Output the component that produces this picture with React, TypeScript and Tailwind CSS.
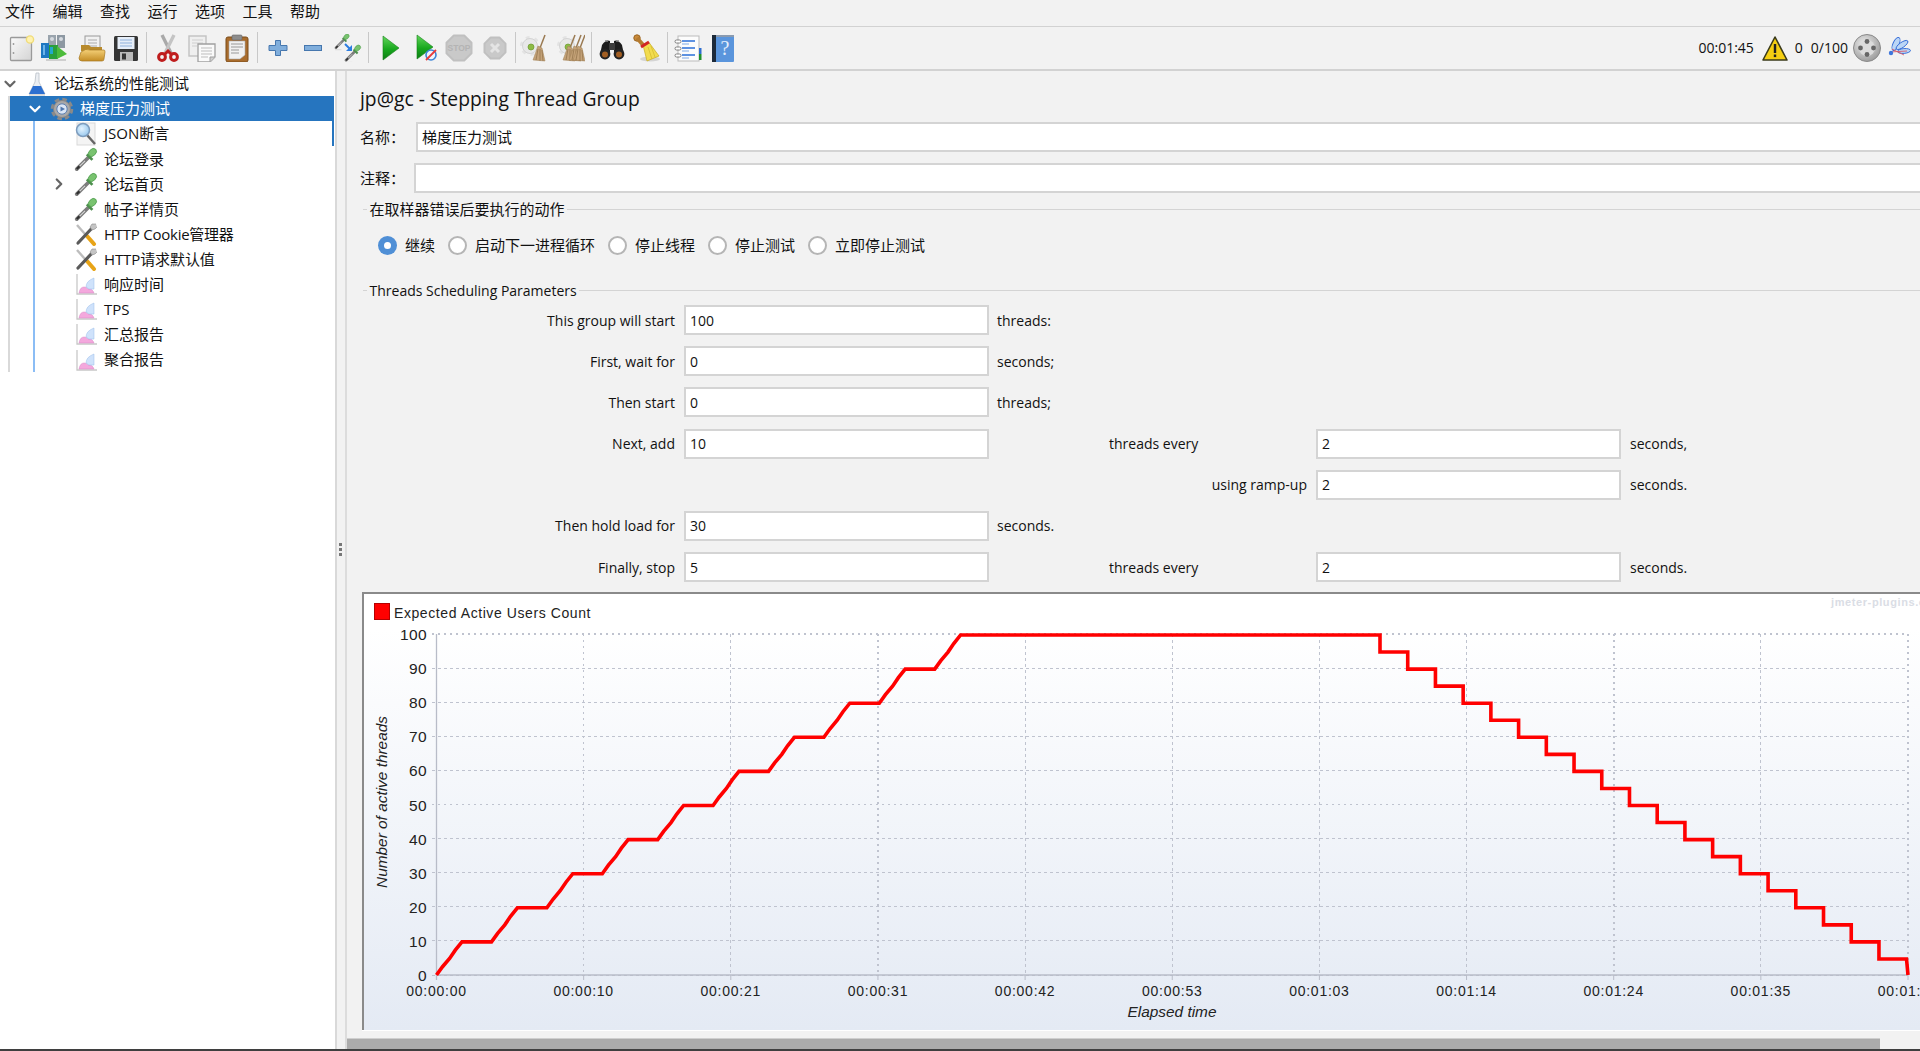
import React from "react";
import { ChevronDown, ChevronRight } from "lucide-react";

const Box = ({ children, w = 28, h = 28, className = "" }: any) => (
  <svg width={w} height={h} viewBox={`0 0 ${w} ${h}`} className={"shrink-0 block " + className}>{children}</svg>
);

const Pipette = () => (
  <g>
    <path d="M3 24 L17 10" stroke="#7d7d7d" strokeWidth="4" strokeLinecap="round" />
    <path d="M4 23 L12 15" stroke="#d8d8d8" strokeWidth="1.1" />
    <path d="M3 24 L6 21" stroke="#2f2f2f" strokeWidth="2.4" />
    <path d="M14 8 L20 14" stroke="#4d8f4d" strokeWidth="3" />
    <ellipse cx="20" cy="6" rx="3.6" ry="5" transform="rotate(45 20 6)" fill="#79c36f" stroke="#4b9a4b" strokeWidth="0.8" />
    <path d="M2 27 L12 27" stroke="#c9c9c9" strokeWidth="1" />
  </g>
);

const New = () => (
  <Box>
    <defs><linearGradient id="nw" x1="0" y1="0" x2="1" y2="1"><stop offset="0" stopColor="#fafafa" /><stop offset="1" stopColor="#d4d4d4" /></linearGradient></defs>
    <rect x="3.5" y="3.5" width="21" height="23" rx="1" fill="url(#nw)" stroke="#9a9a9a" strokeWidth="1.3" />
    <circle cx="6.5" cy="10" r="0.9" fill="#999" /><circle cx="6.5" cy="19" r="0.9" fill="#999" />
    <circle cx="23" cy="5.5" r="3.6" fill="#fff2b0" stroke="#f0dc78" strokeWidth="1.4" />
  </Box>
);
const Templates = () => (
  <Box>
    <rect x="8" y="1" width="8" height="13" fill="#9aa4ad" /><rect x="17" y="1" width="8" height="13" fill="#8d98a2" />
    <circle cx="12" cy="5" r="2" fill="#d5dadf" /><circle cx="21" cy="5" r="2" fill="#d5dadf" />
    <rect x="1" y="9" width="8" height="15" fill="#1f78c1" /><rect x="3" y="11" width="2" height="10" fill="#6cb4ea" />
    <rect x="9" y="11" width="9" height="15" fill="#2a9f3a" /><rect x="10" y="13" width="3" height="7" fill="#24a8c9" />
    <path d="M17 12 L27 20 L17 25 Z" fill="#4cbb3a" />
    <path d="M6 26 L26 26" stroke="#cfcfcf" strokeWidth="2" />
  </Box>
);
const OpenF = () => (
  <Box>
    <rect x="7" y="2" width="15" height="17" fill="#f1f1f1" stroke="#9a9a9a" />
    <path d="M10 6h9M10 9h9M10 12h9" stroke="#aaa" strokeWidth="1" />
    <path d="M3 11 L11 11 L13 13 L24 13 L24 17 L3 17 Z" fill="#b88a2c" />
    <defs><linearGradient id="of" x1="0" y1="0" x2="0" y2="1"><stop offset="0" stopColor="#f6d27a" /><stop offset="1" stopColor="#c48d25" /></linearGradient></defs>
    <path d="M3 18 Q8 14 12 16 L26 16 Q27 16 27 18 L26 25 Q26 27 24 27 L4 27 Q1 27 1 24 Z" fill="url(#of)" stroke="#a87a22" strokeWidth="0.7" />
  </Box>
);
const Save = () => (
  <Box>
    <rect x="2" y="2" width="24" height="25" rx="1.5" fill="#353535" />
    <rect x="5.5" y="3" width="17" height="12" fill="#e6eef8" />
    <path d="M8 6h12M8 9h12M8 12h12" stroke="#8fb1dc" strokeWidth="1" />
    <rect x="8" y="18" width="13" height="9" fill="#b9b9b9" /><rect x="10" y="19.5" width="4" height="6" fill="#333" />
  </Box>
);
const Cut = () => (
  <Box>
    <path d="M8 1 L17 19" stroke="#a9a9a9" strokeWidth="3.4" /><path d="M20 1 L11 19" stroke="#c4c4c4" strokeWidth="3.4" />
    <circle cx="8" cy="23" r="3.4" fill="#f2f2f2" stroke="#bf1d1d" strokeWidth="3" />
    <circle cx="20" cy="23" r="3.4" fill="#f2f2f2" stroke="#bf1d1d" strokeWidth="3" />
    <path d="M11 20 L14 17 L17 20" stroke="#bf1d1d" strokeWidth="3" fill="none" />
  </Box>
);
const Copy = () => (
  <Box>
    <rect x="1" y="2" width="17" height="20" fill="#efefef" stroke="#c2c2c2" strokeWidth="1.4" />
    <path d="M4 6h11M4 9h11M4 12h5" stroke="#cfcfcf" strokeWidth="1" />
    <path d="M10 10 L27 10 L27 23 L22 28 L10 28 Z" fill="#fafafa" stroke="#a0a0a0" strokeWidth="1.3" />
    <path d="M13 14h11M13 17h11M13 20h11M13 23h7" stroke="#bdbdbd" strokeWidth="1" />
    <path d="M22 28 L22 23 L27 23" fill="#cfcfcf" stroke="#a0a0a0" />
  </Box>
);
const Paste = () => (
  <Box>
    <rect x="3" y="3" width="22" height="25" rx="2" fill="#a96c2c" stroke="#7b4c1b" />
    <path d="M6 7 L22 7 L22 21 L17 25 L6 25 Z" fill="#f1f1f1" stroke="#aaa" strokeWidth="0.6" />
    <rect x="9" y="1" width="10" height="5" rx="1" fill="#8d8d8d" stroke="#666" strokeWidth="0.6" />
    <path d="M8 10h12M8 13h12M8 16h8M8 19h8" stroke="#9a9a9a" strokeWidth="1.2" />
  </Box>
);
const Plus = () => (
  <Box><path d="M11.5 6.5 H16.5 V11.5 H23 V16.5 H16.5 V21.5 H11.5 V16.5 H5 V11.5 H11.5 Z" fill="#80aedc" stroke="#4677ae" strokeWidth="1" /></Box>
);
const Minus = () => (
  <Box><rect x="5.5" y="11.5" width="17" height="5" fill="#80aedc" stroke="#4677ae" strokeWidth="1" /></Box>
);
const Toggle = () => (
  <Box>
    <g transform="translate(0,-1) scale(0.62)"><Pipette /></g>
    <g transform="translate(10,10) scale(0.68)"><Pipette /></g>
    <path d="M11 10 L17 16" stroke="#2d7de0" strokeWidth="2" /><path d="M18 11 L18 17 L12 17 Z" fill="#2d7de0" />
  </Box>
);
const Tri = ({ id }: any) => (
  <>
    <defs><linearGradient id={id} x1="0" y1="0" x2="0" y2="1"><stop offset="0" stopColor="#63d65c" /><stop offset="0.55" stopColor="#18a81e" /><stop offset="1" stopColor="#0d7d14" /></linearGradient></defs>
    <path d="M6 2 L22 14 L6 26 Z" fill={`url(#${id})`} stroke="#15801a" strokeWidth="0.6" />
  </>
);
const Start = () => <Box><Tri id="st1" /></Box>;
const StartNT = () => (
  <Box>
    <g transform="translate(0,-1)"><Tri id="st2" /></g>
    <circle cx="20" cy="21" r="5" fill="#eef4fb" stroke="#3d86d8" strokeWidth="1.6" />
    <path d="M15 26 L25 16" stroke="#e83a3a" strokeWidth="1.8" />
  </Box>
);
const Oct = ({ r }: any) => {
  const c = 14, a = r * 0.414;
  return <path d={`M${c - a} ${c - r} L${c + a} ${c - r} L${c + r} ${c - a} L${c + r} ${c + a} L${c + a} ${c + r} L${c - a} ${c + r} L${c - r} ${c + a} L${c - r} ${c - a} Z`} fill="#c9c9c9" stroke="#c0c0c0" strokeLinejoin="round" strokeWidth="2" />;
};
const Stop = () => (
  <Box>
    <Oct r={12.5} />
    <text x="14" y="17" textAnchor="middle" fontSize="8.5" fontWeight="700" fill="#b4b4b4" fontFamily="Liberation Sans, sans-serif">STOP</text>
  </Box>
);
const Shut = () => (
  <Box>
    <Oct r={10.5} />
    <path d="M10 10 L18 18 M18 10 L10 18" stroke="#e4e4e4" strokeWidth="3" />
  </Box>
);
const GearBits = () => (
  <>
    <circle cx="10" cy="12" r="8" fill="none" stroke="#e3e3e3" strokeWidth="4" strokeDasharray="3.5 4.88" />
    <circle cx="10" cy="12" r="7.5" fill="#e8e8e8" stroke="#d4d4d4" />
    <circle cx="11" cy="13" r="3" fill="#8dbb45" stroke="#6b9a2e" strokeWidth="0.7" />
  </>
);
const Broom = ({ x = 0 }: any) => (
  <g transform={`translate(${x},0)`}>
    <path d="M25 1 L20 14" stroke="#9a7a52" strokeWidth="1.5" />
    <path d="M18 12 L22 14 L25 27 L13 26 Z" fill="#c4a278" stroke="#a08055" strokeWidth="0.5" />
    <path d="M18 15 L16 26 M20 15 L20 27 M22 16 L23 27" stroke="#8f7048" strokeWidth="0.7" />
  </g>
);
const Clear = () => <Box><GearBits /><Broom /></Box>;
const ClearAll = () => <Box><GearBits /><Broom x={-7} /><Broom x={-1} /><Broom x={3} /></Box>;
const Binoc = () => (
  <Box>
    <path d="M4 11 Q8 5 12 7 L12 21 L2 21 Z" fill="#1d1d1d" /><path d="M24 11 Q20 5 16 7 L16 21 L26 21 Z" fill="#1d1d1d" />
    <rect x="11" y="9" width="6" height="7" fill="#3c3c3c" />
    <path d="M7 7 L10 7 M18 7 L21 7" stroke="#888" strokeWidth="1.5" />
    <circle cx="7" cy="20" r="5.4" fill="#232323" /><circle cx="21" cy="20" r="5.4" fill="#232323" />
    <circle cx="7" cy="20.5" r="3" fill="#a25e22" /><circle cx="21" cy="20.5" r="3" fill="#a25e22" />
  </Box>
);
const YBroom = () => (
  <Box>
    <ellipse cx="18" cy="25" rx="10" ry="2.5" fill="#d4d4d4" />
    <circle cx="5" cy="4" r="3.2" fill="#c98a3a" stroke="#9a6522" />
    <path d="M5 4 L12 12" stroke="#b57b30" strokeWidth="4" />
    <path d="M11 11 L17 8.5 L27 22 L15 27 Z" fill="#f2dc4e" stroke="#c9ac20" strokeWidth="0.7" />
    <path d="M9 13 L17 8" stroke="#d22525" strokeWidth="3" />
    <path d="M16 13 L20 25 M19 12 L23 23" stroke="#d2b92c" strokeWidth="0.7" />
  </Box>
);
const ListI = () => (
  <Box>
    <rect x="4" y="2" width="21" height="25" fill="#fcfcfc" stroke="#bbb" />
    <path d="M8 7h13M8 14h13M8 21h13" stroke="#2a6fd8" strokeWidth="1.4" /><path d="M8 10h7M8 17h7M8 24h7" stroke="#7fa9e6" strokeWidth="1.2" />
    {[6, 13, 20].map((y) => <rect key={y} x="1" y={y} width="6" height="3" rx="1.5" fill="#fff" stroke="#666" strokeWidth="0.8" />)}
    <rect x="25" y="14" width="2.5" height="6" fill="#2f6fd0" /><rect x="25" y="20" width="2.5" height="6" fill="#1e8f2d" />
  </Box>
);
const Help = () => (
  <Box>
    <rect x="3" y="1" width="22" height="27" rx="1" fill="#5a95dc" />
    <rect x="3" y="1" width="4" height="27" fill="#1c2a3a" /><rect x="7" y="1" width="18" height="2" fill="#8a9bb0" />
    <text x="16" y="21" textAnchor="middle" fontSize="20" fill="#e4eefb" fontFamily="Liberation Serif, serif">?</text>
  </Box>
);
const Sep = ({ className }: any) => <div className={"w-[1px] h-[31px] bg-[#c8c8c8] shrink-0 " + className} />;
const Tool = ({ className, children }: any) => <div className={"shrink-0 " + className}>{children}</div>;

const Warn = () => (
  <Box>
    <path d="M14 3 L26 26 L2 26 Z" fill="#f5cf12" stroke="#3a3a1a" strokeWidth="1.6" strokeLinejoin="round" />
    <rect x="12.8" y="10" width="2.4" height="9" fill="#222" /><rect x="12.8" y="20.5" width="2.4" height="2.6" fill="#222" />
  </Box>
);
const Disc = () => (
  <Box>
    <defs><radialGradient id="ds" cx="0.4" cy="0.35" r="0.8"><stop offset="0" stopColor="#eeeeee" /><stop offset="1" stopColor="#8c8c8c" /></radialGradient></defs>
    <circle cx="14" cy="14" r="13.5" fill="url(#ds)" stroke="#8a8a8a" />
    <circle cx="14" cy="14" r="8" fill="#dcdcdc" />
    <circle cx="14" cy="7.5" r="2.4" fill="#666" /><circle cx="14" cy="20.5" r="2.4" fill="#666" />
    <circle cx="7.5" cy="14" r="2.4" fill="#666" /><circle cx="20.5" cy="14" r="2.4" fill="#666" />
  </Box>
);
const Feather = () => (
  <Box w={24} h={24}>
    <g fill="#bcd6f5" stroke="#2f68d6" strokeWidth="0.9">
      <ellipse cx="9" cy="8" rx="3" ry="7" transform="rotate(25 9 8)" />
      <ellipse cx="15" cy="9" rx="2.6" ry="7" transform="rotate(55 15 9)" />
      <ellipse cx="17" cy="15" rx="2.4" ry="6.5" transform="rotate(85 17 15)" />
    </g>
    <path d="M3 16 L20 15 M5 13 L17 19" stroke="#d65a6a" strokeWidth="0.9" />
    <circle cx="4" cy="17" r="2.2" fill="#3f77dd" />
  </Box>
);

const TFlask = () => (
  <Box w={24} h={24}>
    <path d="M11 1 L14 1 L14 10 L20 22 L4 22 L10 10 Z" fill="#eceff3" stroke="#b9bfc7" strokeWidth="0.8" />
    <path d="M8 14 L16 14 L20 22 L4 22 Z" fill="#2c6fd0" />
    <path d="M4 23 L20 23" stroke="#c4c4c4" />
  </Box>
);
const TGear = () => (
  <Box w={24} h={24}>
    <circle cx="12" cy="12" r="9" fill="none" stroke="#8a8a8a" strokeWidth="4.6" strokeDasharray="4.2 2.87" />
    <circle cx="12" cy="12" r="8.5" fill="#a8a8a8" stroke="#858585" />
    <circle cx="12" cy="12" r="5.2" fill="#dbe6f5" stroke="#5c7fb0" />
    <path d="M10.5 9.5 L15 12 L10.5 14.5 Z" fill="#4f77ae" />
  </Box>
);
const TMag = () => (
  <Box w={24} h={24}>
    <defs><radialGradient id="mg" cx="0.4" cy="0.4" r="0.7"><stop offset="0" stopColor="#e4f3fe" /><stop offset="1" stopColor="#8fc3ec" /></radialGradient></defs>
    <rect x="3" y="1" width="18" height="22" fill="#f4f4f4" stroke="#d9d9d9" />
    <path d="M13 13 L21 22" stroke="#666" strokeWidth="2.5" />
    <circle cx="9" cy="8" r="6.5" fill="url(#mg)" stroke="#7d9cbd" strokeWidth="1.5" />
  </Box>
);
const TPipe = () => <Box w={24} h={24}><g transform="scale(0.92)"><Pipette /></g></Box>;
const TTools = () => (
  <Box w={24} h={24}>
    <path d="M3 3 L18 20" stroke="#bdbdbd" strokeWidth="2.4" />
    <path d="M13 14 L20 22" stroke="#e8a417" strokeWidth="4" strokeLinecap="round" />
    <path d="M19 5 L4 21" stroke="#5a5a5a" strokeWidth="3.2" strokeLinecap="round" />
    <path d="M22 2 L18 2 L16 5 L18 8 L21 7 L23 5" fill="#c4c4c4" stroke="#8c8c8c" strokeWidth="0.6" />
  </Box>
);
const TChart = () => (
  <Box w={24} h={24}>
    <path d="M3 2 L3 22 L23 22" stroke="#c8c8c8" strokeWidth="1.3" fill="none" />
    <path d="M5 21 Q6 15 10 15 Q13 15 14 17 Q17 16 19 19 L20 21 Z" fill="#f4a8dd" stroke="#d884c4" strokeWidth="0.5" />
    <path d="M12 15 Q12 9 20 6 L20 17 Q14 18 12 15 Z" fill="#cfe2fb" stroke="#9abde8" strokeWidth="0.5" />
  </Box>
);

const Row = ({ chevron, icon, label, slot, gap, textGap, className = "", chevClass = "text-[#666]" }: any) => (
  <div className={"flex items-center h-[25.1px] whitespace-nowrap " + className}>
    <span className={"w-[20px] flex justify-center shrink-0 " + slot}>
      {chevron === "d" && <ChevronDown size={18} strokeWidth={3} className={chevClass} />}
      {chevron === "r" && <ChevronRight size={18} strokeWidth={3} className={chevClass} />}
    </span>
    <span className={gap}>{icon}</span>
    <span className={textGap}>{label}</span>
  </div>
);

const fieldBox = "h-[30px] bg-white border-2 border-[#d4d4d4] flex items-center px-[4px] text-[14px] text-[#111]";
const latin = "text-[14px] whitespace-nowrap";

const Param = ({ label, value, unit, mid, value2, unit2 }: any) => (
  <div className="flex items-center h-[30px]">
    <div className={"w-[315px] text-right shrink-0 " + latin}>{label}</div>
    <div className={"ml-[9px] w-[305px] shrink-0 " + fieldBox}>{value}</div>
    {unit && <div className={"ml-[8px] " + latin}>{unit}</div>}
    {mid && <div className={"ml-[120px] w-[207px] shrink-0 " + latin}>{mid}</div>}
    {value2 && (
      <>
        <div className={"w-[305px] shrink-0 " + fieldBox}>{value2}</div>
        <div className={"ml-[9px] " + latin}>{unit2}</div>
      </>
    )}
  </div>
);

const Radio = ({ on, label, className }: any) => (
  <div className={"flex items-center shrink-0 " + className}>
    <span className={"w-[19px] h-[19px] rounded-full shrink-0 flex items-center justify-center " + (on ? "bg-[#4f8fd6]" : "bg-white border-2 border-[#b5b5b5]")}>
      {on && <span className="w-[7px] h-[7px] rounded-full bg-white" />}
    </span>
    <span className="ml-[8px] whitespace-nowrap">{label}</span>
  </div>
);

const Legend = ({ label, className, textClass = "" }: any) => (
  <div className={"flex items-center h-[18px] " + className}>
    <div className="ml-[3px] w-[4px] h-[1px] bg-[#d4d4d4] shrink-0" />
    <div className={"ml-[2.5px] whitespace-nowrap " + textClass}>{label}</div>
    <div className="ml-[2px] flex-1 h-[1px] bg-[#d4d4d4]" />
  </div>
);

const Chart = () => {
  const L = 436.5, R = 1908, T = 634, B = 975;
  const dx = (R - L) / 10, dy = (B - T) / 10;
  const thickX = [1, 3, 8, 10];
  const xLabels = ["00:00:00", "00:00:10", "00:00:21", "00:00:31", "00:00:42", "00:00:53", "00:01:03", "00:01:14", "00:01:24", "00:01:35", "00:01:45"];
  const yOf = (v: number) => B + 1 - (v * dy) / 10;
  const pts: [number, number][] = [[L, yOf(0) - 1]];
  for (let k = 1; k <= 10; k++) {
    const s = 462 + 55.4 * (k - 1);
    const x0 = k === 1 ? L : 462 + 55.4 * (k - 2) + 29.5;
    const y0 = k === 1 ? yOf(0) - 1 : yOf((k - 1) * 10);
    const y1 = yOf(k * 10);
    [0.25, 0.5, 0.75].forEach((t, j) => {
      pts.push([x0 + (s - x0) * t + (j % 2 ? 0.35 : -0.35), y0 + (y1 - y0) * t]);
    });
    pts.push([s, y1]);
    if (k < 10) pts.push([s + 29.5, y1]);
  }
  for (let k = 0; k < 19; k++) {
    const x = 1380 + 27.72 * k;
    pts.push([x, yOf(100 - 5 * k)]);
    pts.push([x, yOf(95 - 5 * k)]);
  }
  pts.push([1906.5, yOf(5)]);
  pts.push([1908, B]);
  const f = "Liberation Sans, Arial, sans-serif";
  return (
    <svg width={1556} height={436} viewBox="364 594 1556 436" className="block">
      {Array.from({ length: 11 }, (_, i) => {
        const y = B - i * dy;
        const big = i === 10 || i === 5;
        return <line key={"h" + i} x1={L - 5} x2={R} y1={y} y2={y} stroke="#bfc3cf" strokeWidth={big ? 1.6 : 1} strokeDasharray={big ? "2 4" : "3 3"} shapeRendering="crispEdges" />;
      })}
      {Array.from({ length: 10 }, (_, i) => {
        const x = L + (i + 1) * dx, big = thickX.includes(i + 1);
        return (
          <g key={"v" + i}>
            <line x1={x} x2={x} y1={T} y2={B} stroke="#bfc3cf" strokeWidth={big ? 1.6 : 1} strokeDasharray={big ? "2 4" : "3 3"} shapeRendering="crispEdges" />
            <line x1={x} x2={x} y1={B} y2={B + 5} stroke="#b8bcc8" />
          </g>
        );
      })}
      <line x1={L} x2={L} y1={T} y2={B + 5} stroke="#b8bcc8" strokeWidth="1.3" />
      <line x1={L} x2={R} y1={B} y2={B} stroke="#b8bcc8" strokeWidth="1.3" />
      <polyline points={pts.map((p) => p.join(",")).join(" ")} fill="none" stroke="#ff0000" strokeWidth="3.6" strokeLinejoin="miter" />
      <rect x="374.5" y="603.5" width="15" height="16" fill="#ff0000" stroke="#b50000" />
      <text x="394" y="618" fontSize="14" letterSpacing="0.58" fill="#222" fontFamily={f}>Expected Active Users Count</text>
      <text x="1831" y="606" fontSize="11" fontWeight="700" letterSpacing="0.6" fill="#dadde5" fontFamily={f}>jmeter-plugins.org</text>
      {Array.from({ length: 11 }, (_, i) => (
        <text key={"yl" + i} x="427" y={B - i * dy + 6} textAnchor="end" fontSize="15.5" letterSpacing="0.4" fill="#222" fontFamily={f}>{i * 10}</text>
      ))}
      {xLabels.map((t, i) => (
        <text key={t} x={L + i * dx} y="996" textAnchor="middle" fontSize="14" letterSpacing="0.75" fill="#222" fontFamily={f}>{t}</text>
      ))}
      <text x="1172" y="1017" textAnchor="middle" fontSize="15.4" fontStyle="italic" fill="#222" fontFamily={f}>Elapsed time</text>
      <text transform="translate(387,802) rotate(-90)" textAnchor="middle" fontSize="15.4" fontStyle="italic" fill="#222" fontFamily={f}>Number of active threads</text>
    </svg>
  );
};

export default function App() {
  return (
    <div className="w-[1920px] h-[1051px] overflow-hidden flex flex-col bg-[#f2f2f2] text-[#111] text-[15px] font-['Open_Sans','Noto_Sans_CJK_SC',sans-serif]">
      <div className="h-[27px] shrink-0 border-b border-[#d2d2d2] flex items-center pl-[5px] gap-[17.5px] text-[15px] leading-none pb-[3px]">
        {["文件", "编辑", "查找", "运行", "选项", "工具", "帮助"].map((m) => <span key={m}>{m}</span>)}
      </div>

      <div className="h-[44px] shrink-0 border-b-2 border-[#d2d2d2] flex items-center pb-[1px]">
        <Tool className="ml-[7px]"><New /></Tool>
        <Tool className="ml-[5px]"><Templates /></Tool>
        <Tool className="ml-[10px]"><OpenF /></Tool>
        <Tool className="ml-[6px]"><Save /></Tool>
        <Sep className="ml-[6px]" />
        <Tool className="ml-[7px]"><Cut /></Tool>
        <Tool className="ml-[6px]"><Copy /></Tool>
        <Tool className="ml-[7px]"><Paste /></Tool>
        <Sep className="ml-[6px]" />
        <Tool className="ml-[6px]"><Plus /></Tool>
        <Tool className="ml-[7px]"><Minus /></Tool>
        <Tool className="ml-[7px]"><Toggle /></Tool>
        <Sep className="ml-[6px]" />
        <Tool className="ml-[8px]"><Start /></Tool>
        <Tool className="ml-[6px]"><StartNT /></Tool>
        <Tool className="ml-[6px]"><Stop /></Tool>
        <Tool className="ml-[8px]"><Shut /></Tool>
        <Sep className="ml-[6px]" />
        <Tool className="ml-[4px]"><Clear /></Tool>
        <Tool className="ml-[9px]"><ClearAll /></Tool>
        <Sep className="ml-[6px]" />
        <Tool className="ml-[6px]"><Binoc /></Tool>
        <Tool className="ml-[6px]"><YBroom /></Tool>
        <Sep className="ml-[7px]" />
        <Tool className="ml-[6px]"><ListI /></Tool>
        <Tool className="ml-[7px]"><Help /></Tool>
        <div className="ml-auto flex items-center text-[14px] pr-[9px]">
          <span>00:01:45</span>
          <Tool className="ml-[7px]"><Warn /></Tool>
          <span className="ml-[6px]">0</span>
          <span className="ml-[8px]">0/100</span>
          <Tool className="ml-[5px]"><Disc /></Tool>
          <Tool className="ml-[6px]"><Feather /></Tool>
        </div>
      </div>

      <div className="flex-1 min-h-0 flex">
        <div className="w-[337px] shrink-0 bg-white border-r-2 border-[#d9d9d9]">
          <Row chevron="d" icon={<TFlask />} label="论坛系统的性能测试" slot="" gap="ml-[5px]" textGap="ml-[5px]" />
          <div className="ml-[8px] border-l-2 border-[#d9d9d9] w-[326px]">
            <Row chevron="d" chevClass="text-white" icon={<TGear />} label="梯度压力测试" slot="ml-[15px]" gap="ml-[5px]" textGap="ml-[6px]" className="bg-[#2675bf] text-white" />
            <div className="ml-[23px] border-l-2 border-[#8bbdf5]">
              <Row icon={<TMag />} label="JSON断言" slot="ml-[14px]" gap="ml-[5px]" textGap="ml-[6px]" className="border-r-2 border-[#2675bf]" />
              <Row icon={<TPipe />} label="论坛登录" slot="ml-[14px]" gap="ml-[5px]" textGap="ml-[6px]" />
              <Row chevron="r" icon={<TPipe />} label="论坛首页" slot="ml-[14px]" gap="ml-[5px]" textGap="ml-[6px]" />
              <Row icon={<TPipe />} label="帖子详情页" slot="ml-[14px]" gap="ml-[5px]" textGap="ml-[6px]" />
              <Row icon={<TTools />} label="HTTP Cookie管理器" slot="ml-[14px]" gap="ml-[5px]" textGap="ml-[6px] tracking-[-0.25px]" />
              <Row icon={<TTools />} label="HTTP请求默认值" slot="ml-[14px]" gap="ml-[5px]" textGap="ml-[6px] tracking-[-0.1px]" />
              <Row icon={<TChart />} label="响应时间" slot="ml-[14px]" gap="ml-[5px]" textGap="ml-[6px]" />
              <Row icon={<TChart />} label="TPS" slot="ml-[14px]" gap="ml-[5px]" textGap="ml-[6px]" />
              <Row icon={<TChart />} label="汇总报告" slot="ml-[14px]" gap="ml-[5px]" textGap="ml-[6px]" />
              <Row icon={<TChart />} label="聚合报告" slot="ml-[14px]" gap="ml-[5px]" textGap="ml-[6px]" />
            </div>
          </div>
        </div>

        <div className="w-[8px] shrink-0 flex flex-col items-center justify-center gap-[2px] pb-[22px] pr-[2px]">
          <span className="w-[3px] h-[3px] bg-[#777]" /><span className="w-[3px] h-[3px] bg-[#777]" /><span className="w-[3px] h-[3px] bg-[#777]" />
        </div>

        <div className="flex-1 min-w-0 flex flex-col border-l-2 border-[#dcdcdc] overflow-hidden">
          <div className="pl-[13px] pt-[13px] flex flex-col w-[1573px]">
            <div className="h-[30px] flex items-center text-[19.3px] whitespace-nowrap">jp@gc - Stepping Thread Group</div>
            <div className="mt-[8px] flex items-center">
              <div className="w-[56px] shrink-0">名称：</div>
              <div className="w-[1530px] shrink-0 h-[30px] bg-white border-2 border-[#d4d4d4] flex items-center px-[4px] text-[15px] text-[#111]">梯度压力测试</div>
            </div>
            <div className="mt-[11px] flex items-center">
              <div className="w-[54px] shrink-0">注释：</div>
              <div className={"w-[1530px] shrink-0 " + fieldBox} />
            </div>
            <Legend label="在取样器错误后要执行的动作" className="mt-[7px]" />
            <div className="mt-[15px] flex items-center h-[24px]">
              <Radio on label="继续" className="ml-[18px] w-[70px]" />
              <Radio label="启动下一进程循环" className="w-[160px]" />
              <Radio label="停止线程" className="w-[100px]" />
              <Radio label="停止测试" className="w-[100px]" />
              <Radio label="立即停止测试" className="" />
            </div>
            <Legend label="Threads Scheduling Parameters" textClass="text-[14px]" className="mt-[24px]" />
            <div className="mt-[6px] flex flex-col gap-[11.2px]">
              <Param label="This group will start" value="100" unit="threads:" />
              <Param label="First, wait for" value="0" unit="seconds;" />
              <Param label="Then start" value="0" unit="threads;" />
              <Param label="Next, add" value="10" mid="threads every" value2="2" unit2="seconds," />
              <div className="flex items-center h-[30px]">
                <div className={"w-[947px] text-right shrink-0 " + latin}>using ramp-up</div>
                <div className={"ml-[9px] w-[305px] shrink-0 " + fieldBox}>2</div>
                <div className={"ml-[9px] " + latin}>seconds.</div>
              </div>
              <Param label="Then hold load for" value="30" unit="seconds." />
              <Param label="Finally, stop" value="5" mid="threads every" value2="2" unit2="seconds." />
            </div>
          </div>
          <div className="mt-[10px] ml-[15px] h-[438px] shrink-0 border-l-2 border-t-2 border-[#8a8a8a] bg-linear-to-b from-white from-[8%] to-[#e4eaf4]">
            <Chart />
          </div>
          <div className="h-[1px] bg-white ml-[15px] shrink-0" />
          <div className="flex-1 min-h-0 flex flex-col justify-end">
            <div className="w-[1533px] h-[11px] bg-[#ababab] border-t border-[#cfcfcf]" />
          </div>
        </div>
      </div>
      <div className="h-[2px] shrink-0 bg-[#3f3f3f]" />
    </div>
  );
}
